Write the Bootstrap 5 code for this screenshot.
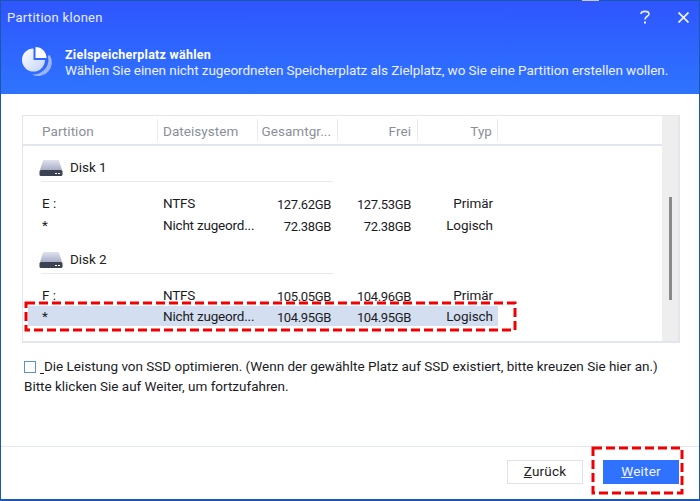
<!DOCTYPE html>
<html lang="de"><head><meta charset="utf-8"><title>Partition klonen</title>
<link href="https://cdn.jsdelivr.net/npm/bootstrap@5.3.0/dist/css/bootstrap.min.css" rel="stylesheet">
<style>
html,body{margin:0;width:700px;height:501px;overflow:hidden;background:#fff}
body{font-family:Roboto,"Liberation Sans",sans-serif;font-size:13.5px;color:#1b1b1f;letter-spacing:-.07px;line-height:1}
.dlg{width:700px;height:501px;border:solid #1a58ad;border-width:1px 1px 2px 1px;position:relative;display:flex;flex-direction:column;background:#fff}
.hdr{height:93px;background:linear-gradient(#2f55ff,#2e74ff);color:#f0f3ff;padding:0 0 0 6px;flex:none}
.ttl{height:32px;display:flex;align-items:center;font-size:13px;letter-spacing:.3px;color:#e8ecff}
.ctl{margin-left:auto;display:flex;align-items:center;gap:28px;padding-right:10px}
.sub{display:flex;align-items:flex-start;gap:11px;padding:13px 0 0 15px}
.sub b{font-weight:700;display:block;margin:3px 0 2px;font-size:12.5px;letter-spacing:.25px;color:#fff}
.sub span{display:block;color:#edf0ff}
.main{flex:1;padding:21px 19px 0 21px}
.pane{height:228px;display:flex;overflow:hidden;border:solid #e3e6ee;border-width:1px 2px 2px 1px}
.lst{flex:1;min-width:0}
.rowh{display:flex;height:30px;align-items:center;color:#8a8f98;border-bottom:2px solid #e3e6ee;letter-spacing:.05px}
.rowh>div{height:22px;display:flex;align-items:center;border-right:1px solid #e8ebf0;padding-top:3px}
.c1{width:135px;padding-left:19px;flex:none}.c2{width:100px;padding-left:5px;flex:none}.c3{width:80px;padding-left:2px;flex:none;justify-content:flex-end;padding-right:6px}.c4{width:80px;flex:none;justify-content:flex-end;padding-right:6px}.c5{width:80px;flex:none;justify-content:flex-end;padding-right:5px}
.dsk{display:flex;align-items:center;gap:7px;height:36px;padding-top:8px;margin:0 0 0 18px;width:292px;border-bottom:1px solid #e6e9ef;color:#222}
.dsk svg{margin-left:-2px}
.dsk2{margin-top:2px}
.rw{display:flex;align-items:center;height:22px;width:470px;margin-left:5px;padding-top:2px;color:#1b1b1f}
.rw>div{white-space:nowrap}
.rw .c1{width:130px;padding-left:14px}
.rw .c2{letter-spacing:-.2px}
.rw .c3,.rw .c4{font-size:13px;letter-spacing:-.35px;padding-right:7px}
.sel{background:#d3dff0;height:20px;padding-top:2px}
.grp{margin-top:10px}
.scr{width:16px;background:#eeeeef;flex:none;position:relative}
.thumb{position:absolute;left:7px;top:81px;width:3px;height:103px;background:#8a8a8a}
.opt{padding:13px 0 0 2px;line-height:20px;letter-spacing:-.01px}
.opt>div{height:20px}
.chk{width:12px;height:12px;border:1px solid #5b8fd6;display:inline-block;margin-right:4px;vertical-align:-2px;background:#fff}
.opt u{text-decoration:none;border-bottom:1px solid #222;font-size:8px;letter-spacing:0}
.ftr{height:53px;border-top:1px solid #e3e8f0;display:flex;justify-content:flex-end;gap:20px;padding:13px 20px 0 0;flex:none}
.bb{width:76px;height:24px;border-radius:0;padding:0;font-size:13.5px;letter-spacing:.2px;line-height:1;--bs-btn-border-radius:0}
.bb1,.bb1:hover{background:#fff;border:1px solid #dfe3eb;color:#222}
.bb2,.bb2:hover{background:#2f72ff;border:1px solid #2f72ff;color:#f2f5ff}
.mk{position:absolute;pointer-events:none}
.spk{position:absolute;left:581px;top:-1px;width:17px;height:1px;background:#c9c9c9}
</style></head><body>
<div class="dlg">
<div class="spk"></div>
<div class="hdr">
 <div class="ttl"><span>Partition klonen</span><div class="ctl">
  <svg width="10" height="14" viewBox="0 0 10 14"><path d="M1 4 C1 .5 9 .5 9 4 C9 6.500 5 6 5 9.500" fill="none" stroke="#e8ecff" stroke-width="1.6"/><rect x="4" y="11.500" width="2" height="2" fill="#e8ecff"/></svg>
  <svg width="11" height="11" viewBox="0 0 11 11"><path d="M.5 .5 L10.500 10.500 M10.500 .5 L.5 10.500" stroke="#eef1ff" stroke-width="1.7"/></svg>
 </div></div>
 <div class="sub">
  <svg width="32" height="32" viewBox="0 0 32 32"><defs><linearGradient id="g" x1="0" y1="0" x2="1" y2="1"><stop offset="0" stop-color="#fff"/><stop offset="1" stop-color="#c4d2fb"/></linearGradient><linearGradient id="c" x1="0" y1="0" x2="1" y2="1"><stop offset="0" stop-color="#b9cbfc"/><stop offset="1" stop-color="#8eaaf8"/></linearGradient></defs>
  <path d="M27.500 9 A13.500 13.500 0 0 1 10 28.500 A15.500 15.500 0 0 0 26.500 15 L26 10 Z" fill="url(#c)"/>
  <path d="M11.500 2.500 A11.500 11.500 0 1 0 23 14 H11.500 Z" fill="url(#g)"/>
  <path d="M13.500 1 A11 11 0 0 1 24.500 12 H13.500 Z" fill="#fff"/></svg>
  <div><b>Zielspeicherplatz wählen</b><span>Wählen Sie einen nicht zugeordneten Speicherplatz als Zielplatz, wo Sie eine Partition erstellen wollen.</span></div>
 </div>
</div>
<div class="main">
 <div class="pane">
  <div class="lst">
   <div class="rowh"><div class="c1">Partition</div><div class="c2">Dateisystem</div><div class="c3">Gesamtgr...</div><div class="c4">Frei</div><div class="c5">Typ</div></div>
   <div class="dsk"><svg width="24" height="18" viewBox="0 0 24 18"><defs><linearGradient id="d" x1="0" y1="0" x2="0" y2="1"><stop offset="0" stop-color="#dfe2ee"/><stop offset="1" stop-color="#a9aec6"/></linearGradient></defs><path d="M4 1.500 Q4.500 1 5.500 1 H18.500 Q19.500 1 20 1.500 L23 11 H1 Z" fill="url(#d)"/><rect x="0.500" y="11" width="23" height="6" rx="1.500" fill="#3c4252"/><rect x="16" y="14" width="2" height="1" fill="#fff"/><rect x="19" y="14" width="2" height="1" fill="#fff"/></svg>Disk 1</div>
   <div class="grp">
    <div class="rw"><div class="c1">E :</div><div class="c2">NTFS</div><div class="c3 d-flex">127.62GB</div><div class="c4 d-flex">127.53GB</div><div class="c5 d-flex">Primär</div></div>
    <div class="rw"><div class="c1">*</div><div class="c2">Nicht zugeord...</div><div class="c3 d-flex">72.38GB</div><div class="c4 d-flex">72.38GB</div><div class="c5 d-flex">Logisch</div></div>
   </div>
   <div class="dsk dsk2"><svg width="24" height="18" viewBox="0 0 24 18"><path d="M4 1.500 Q4.500 1 5.500 1 H18.500 Q19.500 1 20 1.500 L23 11 H1 Z" fill="url(#d)"/><rect x="0.500" y="11" width="23" height="6" rx="1.500" fill="#3c4252"/><rect x="16" y="14" width="2" height="1" fill="#fff"/><rect x="19" y="14" width="2" height="1" fill="#fff"/></svg>Disk 2</div>
   <div class="grp">
    <div class="rw"><div class="c1">F :</div><div class="c2">NTFS</div><div class="c3 d-flex">105.05GB</div><div class="c4 d-flex">104.96GB</div><div class="c5 d-flex">Primär</div></div>
    <div class="rw sel"><div class="c1">*</div><div class="c2">Nicht zugeord...</div><div class="c3 d-flex">104.95GB</div><div class="c4 d-flex">104.95GB</div><div class="c5 d-flex">Logisch</div></div>
   </div>
  </div>
  <div class="scr"><div class="thumb"></div></div>
 </div>
 <div class="opt"><div><span class="chk"></span><u>&nbsp;&nbsp;</u>Die Leistung von SSD optimieren. (Wenn der gewählte Platz auf SSD existiert, bitte kreuzen Sie hier an.)</div><div>Bitte klicken Sie auf Weiter, um fortzufahren.</div></div>
</div>
<div class="ftr"><button class="btn bb bb1"><u>Z</u>urück</button><button class="btn bb bb2"><u>W</u>eiter</button></div>
<svg class="mk" style="left:23px;top:300px" width="494" height="32"><rect x="2" y="2" width="489" height="27" fill="none" stroke="#f00000" stroke-width="3" stroke-dasharray="9 4"/></svg>
<svg class="mk" style="left:590px;top:445px" width="94" height="50"><rect x="2" y="2" width="89" height="45" fill="none" stroke="#f00000" stroke-width="3" stroke-dasharray="9 4"/></svg>
</div>
</body></html>
